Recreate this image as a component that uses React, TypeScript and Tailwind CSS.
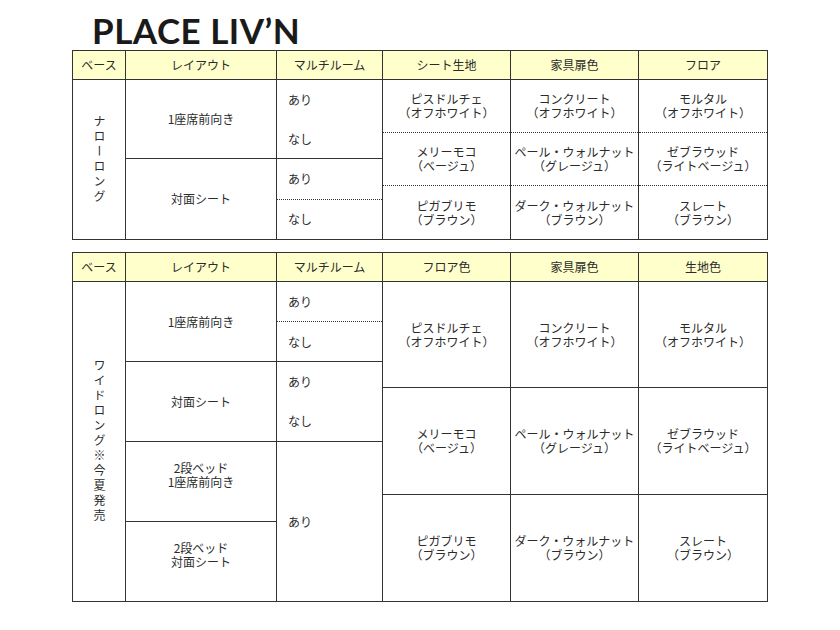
import React from "react";

const W = ["w-[53px]", "w-[151px]", "w-[106px]", "w-[128px]", "w-[128px]", "flex-1"];

function HeaderRow({ cols }: { cols: string[] }) {
  return (
    <div className="flex h-[29px] border-b border-[#333] bg-[#ffffcc]">
      {cols.map((c, i) => (
        <div
          key={i}
          className={`${W[i]} flex items-center justify-center ${i < 5 ? "border-r border-[#333]" : ""}`}
        >
          {c}
        </div>
      ))}
    </div>
  );
}

function Two({ a, b }: { a: string; b: string }) {
  return (
    <div className="text-center leading-[14px]">
      <div>{a}</div>
      <div>{b}</div>
    </div>
  );
}

function Vertical({ text }: { text: string }) {
  return (
    <div className="w-[53px] shrink-0 border-r border-[#333] flex items-center justify-center">
      <div className="[writing-mode:vertical-rl] [text-orientation:upright] tracking-[3px] leading-[14px]">
        {text}
      </div>
    </div>
  );
}

function Half({ t, dotted }: { t: string; dotted?: boolean }) {
  return (
    <div
      className={`flex-1 min-h-0 flex items-center pl-[11px] ${dotted ? "border-b border-dotted border-[#333]" : ""}`}
    >
      {t}
    </div>
  );
}

const colors1: [string, string][][] = [
  [
    ["ピスドルチェ", "（オフホワイト）"],
    ["メリーモコ", "（ベージュ）"],
    ["ピガブリモ", "（ブラウン）"],
  ],
  [
    ["コンクリート", "（オフホワイト）"],
    ["ペール・ウォルナット", "（グレージュ）"],
    ["ダーク・ウォルナット", "（ブラウン）"],
  ],
  [
    ["モルタル", "（オフホワイト）"],
    ["ゼブラウッド", "（ライトベージュ）"],
    ["スレート", "（ブラウン）"],
  ],
];

function ColorCol1({ items, last }: { items: [string, string][]; last?: boolean }) {
  return (
    <div className={`${last ? "flex-1" : "w-[128px] shrink-0 border-r border-[#333]"} flex flex-col`}>
      <div className="h-[53px] shrink-0 flex items-center justify-center border-b border-dotted border-[#333]">
        <Two a={items[0][0]} b={items[0][1]} />
      </div>
      <div className="h-[53px] shrink-0 flex items-center justify-center border-b border-dotted border-[#333]">
        <Two a={items[1][0]} b={items[1][1]} />
      </div>
      <div className="flex-1 flex items-center justify-center">
        <Two a={items[2][0]} b={items[2][1]} />
      </div>
    </div>
  );
}

function ColorCol2({ items, last }: { items: [string, string][]; last?: boolean }) {
  return (
    <div className={`${last ? "flex-1" : "w-[128px] shrink-0 border-r border-[#333]"} flex flex-col`}>
      <div className="h-[106px] shrink-0 flex items-center justify-center border-b border-[#333]">
        <Two a={items[0][0]} b={items[0][1]} />
      </div>
      <div className="h-[107px] shrink-0 flex items-center justify-center border-b border-[#333]">
        <Two a={items[1][0]} b={items[1][1]} />
      </div>
      <div className="flex-1 flex items-center justify-center">
        <Two a={items[2][0]} b={items[2][1]} />
      </div>
    </div>
  );
}

function Table1() {
  return (
    <div className="w-[696px] border border-[#333]">
      <HeaderRow cols={["ベース", "レイアウト", "マルチルーム", "シート生地", "家具扉色", "フロア"]} />
      <div className="flex h-[159px]">
        <Vertical text="ナローロング" />
        <div className="w-[151px] shrink-0 border-r border-[#333] flex flex-col">
          <div className="h-[79px] shrink-0 flex items-center justify-center border-b border-[#333]">1座席前向き</div>
          <div className="flex-1 flex items-center justify-center">対面シート</div>
        </div>
        <div className="w-[106px] shrink-0 border-r border-[#333] flex flex-col">
          <div className="h-[79px] shrink-0 flex flex-col border-b border-[#333]">
            <Half t="あり" />
            <Half t="なし" />
          </div>
          <div className="flex-1 flex flex-col">
            <Half t="あり" dotted />
            <Half t="なし" />
          </div>
        </div>
        <ColorCol1 items={colors1[0]} />
        <ColorCol1 items={colors1[1]} />
        <ColorCol1 items={colors1[2]} last />
      </div>
    </div>
  );
}

function Table2() {
  return (
    <div className="w-[696px] border border-[#333]">
      <HeaderRow cols={["ベース", "レイアウト", "マルチルーム", "フロア色", "家具扉色", "生地色"]} />
      <div className="flex h-[319px]">
        <Vertical text="ワイドロング※今夏発売" />
        <div className="w-[151px] shrink-0 border-r border-[#333] flex flex-col">
          <div className="h-[80px] shrink-0 flex items-center justify-center border-b border-[#333]">1座席前向き</div>
          <div className="h-[80px] shrink-0 flex items-center justify-center border-b border-[#333]">対面シート</div>
          <div className="h-[80px] shrink-0 flex items-center justify-center border-b border-[#333] pb-[14px]">
            <Two a="2段ベッド" b="1座席前向き" />
          </div>
          <div className="flex-1 flex items-center justify-center pb-[14px]">
            <Two a="2段ベッド" b="対面シート" />
          </div>
        </div>
        <div className="w-[106px] shrink-0 border-r border-[#333] flex flex-col">
          <div className="h-[80px] shrink-0 flex flex-col border-b border-[#333]">
            <Half t="あり" dotted />
            <Half t="なし" />
          </div>
          <div className="h-[80px] shrink-0 flex flex-col border-b border-[#333]">
            <Half t="あり" />
            <Half t="なし" />
          </div>
          <div className="flex-1 flex items-center pl-[11px]">あり</div>
        </div>
        <ColorCol2 items={colors1[0]} />
        <ColorCol2 items={colors1[1]} />
        <ColorCol2 items={colors1[2]} last />
      </div>
    </div>
  );
}

export default function App() {
  return (
    <div className="w-[840px] h-[630px] bg-white overflow-hidden font-['Noto_Sans_CJK_JP','Noto_Sans_CJK_SC',sans-serif] text-[12px] text-[#2b2b2b]">
      <div className="pl-[92px] pt-[10px] h-[50px]">
        <div className="font-['Lato',sans-serif] font-bold text-[35px] leading-[40px] text-[#1a1a1a] tracking-[0.5px]">
          PLACE LIV’N
        </div>
      </div>
      <div className="pl-[72px] flex flex-col gap-[12px]">
        <Table1 />
        <Table2 />
      </div>
    </div>
  );
}
